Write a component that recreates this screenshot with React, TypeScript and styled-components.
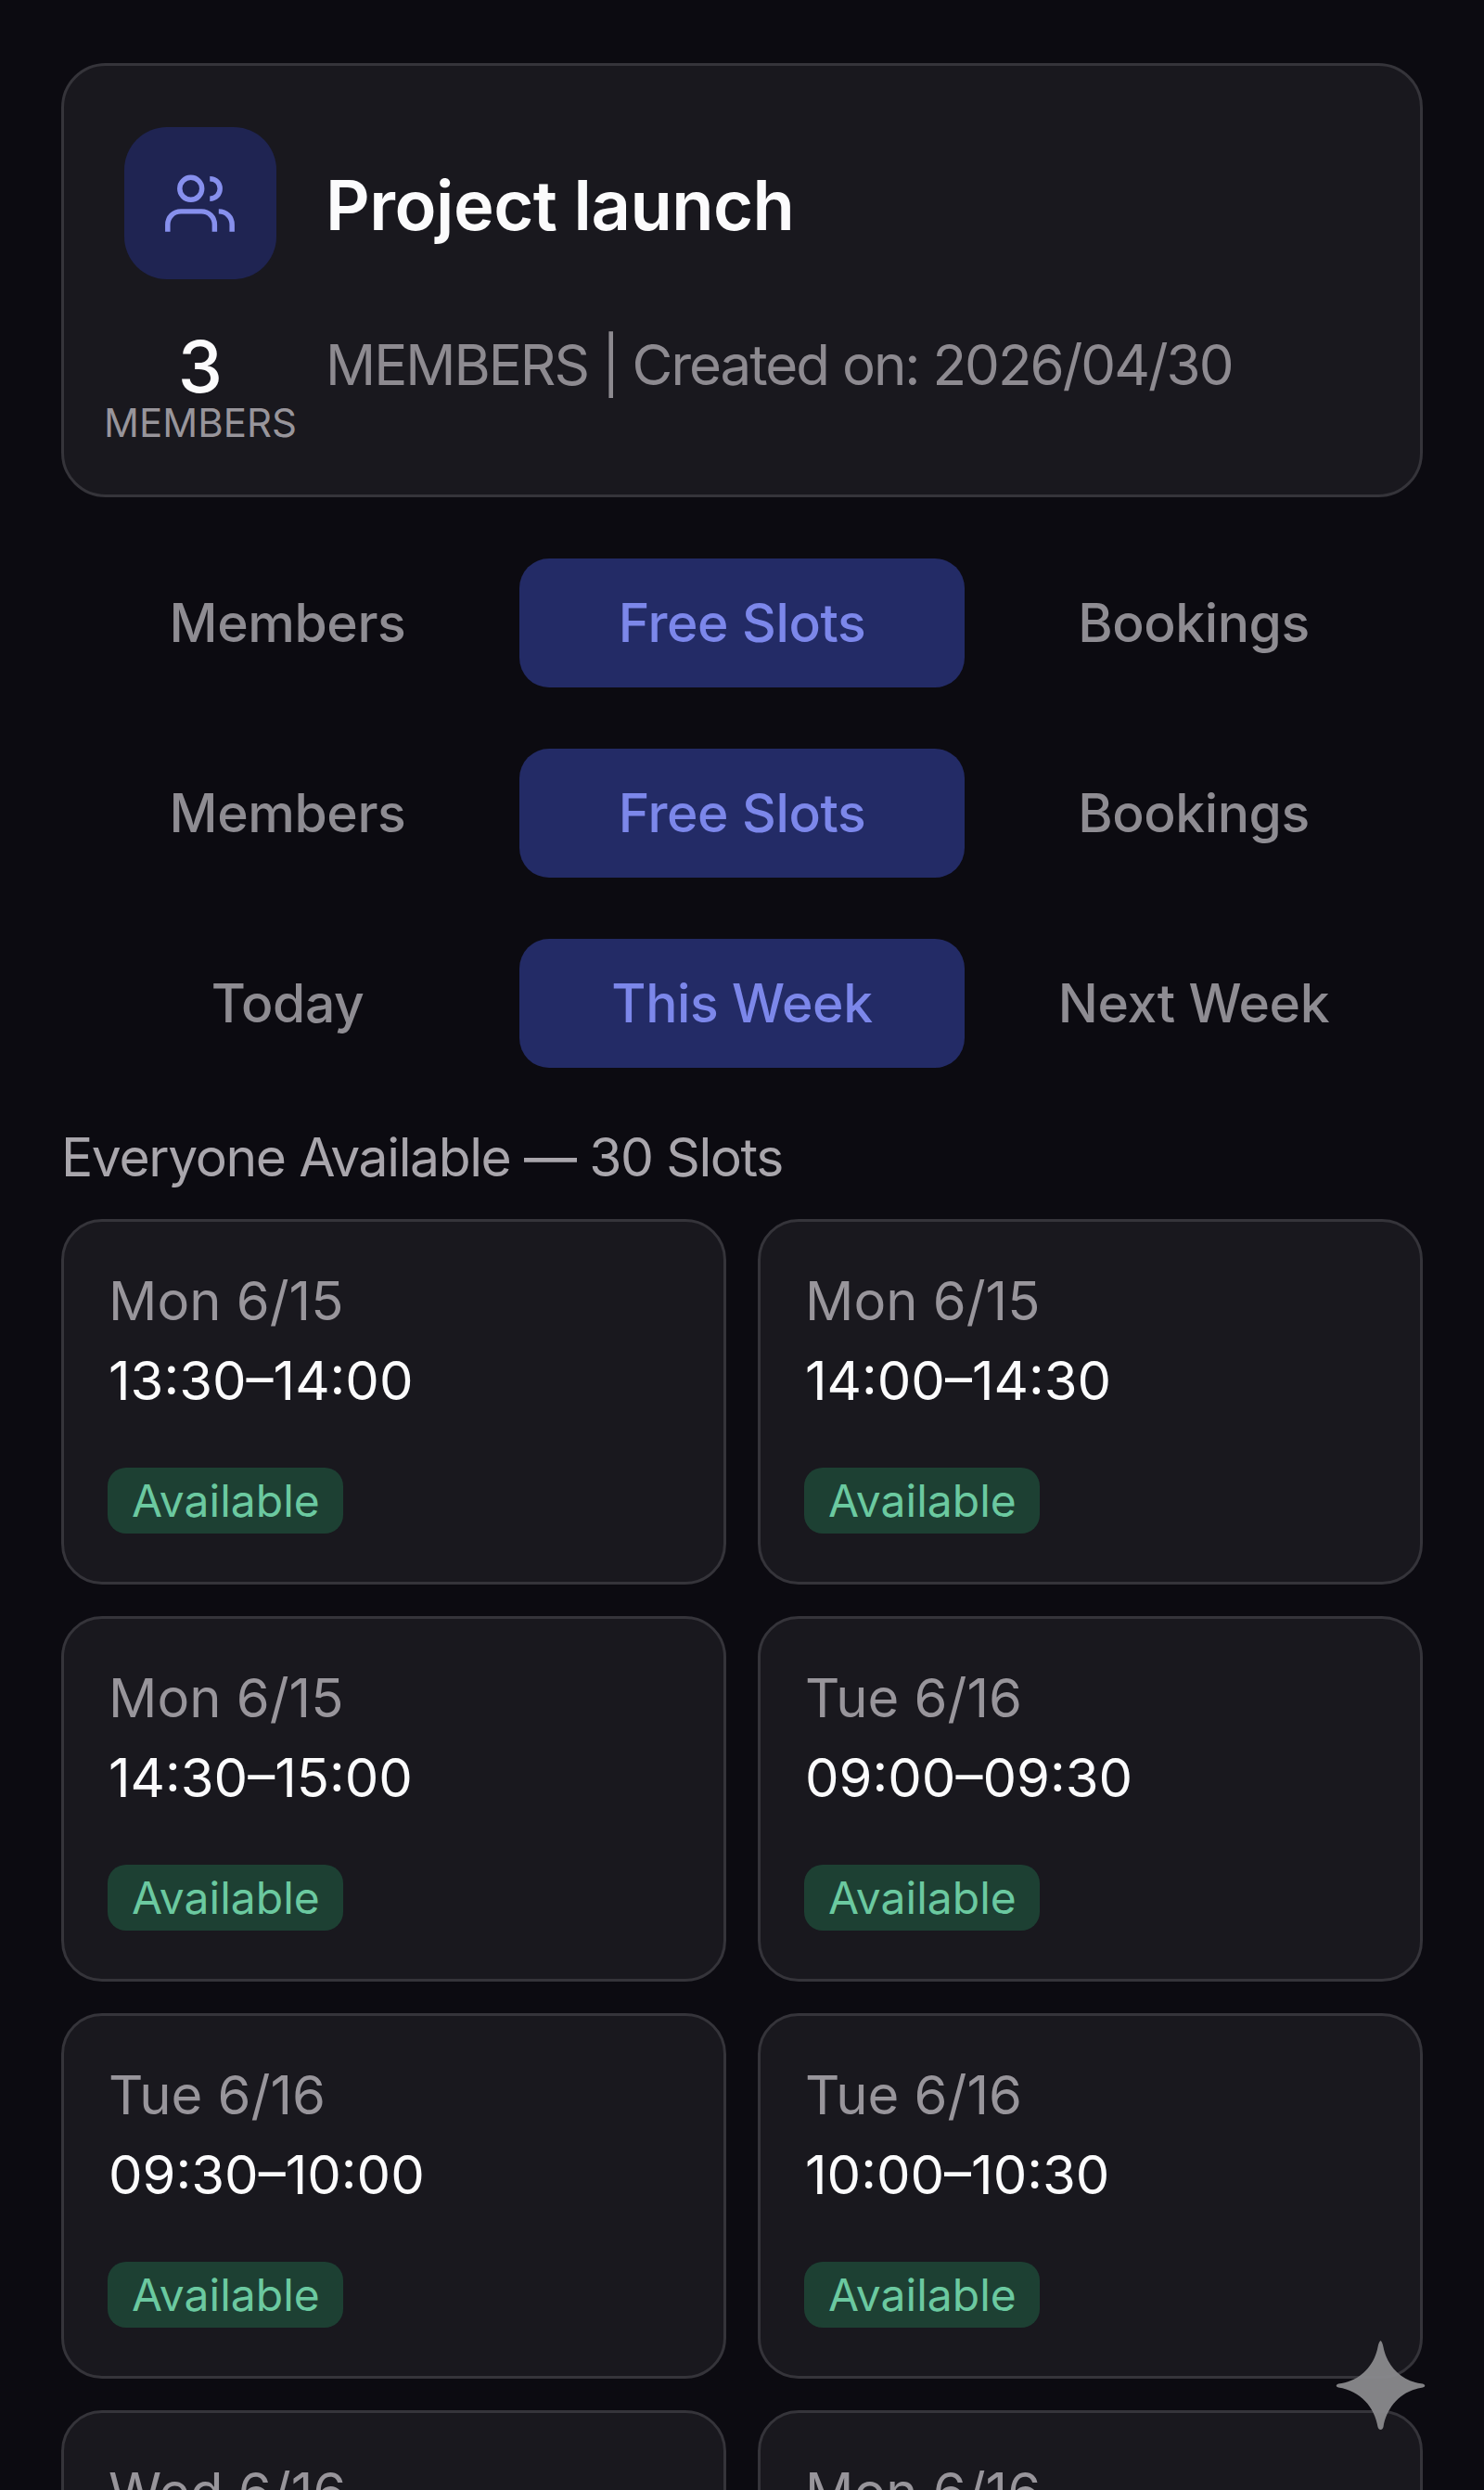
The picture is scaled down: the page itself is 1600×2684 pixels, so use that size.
import React from "react";
import styled, { createGlobalStyle } from "styled-components";

const Global = createGlobalStyle`
  html, body { margin: 0; padding: 0; background: #0c0b11; }
  body { font-family: Inter, "Noto Sans", "Liberation Sans", sans-serif; }
  * { box-sizing: border-box; }
`;

const Page = styled.div`
  position: relative;
  width: 1600px;
  height: 2684px;
  overflow: hidden;
  background: #0c0b11;
  padding: 68px 66px 0 66px;
`;

const HeaderCard = styled.section`
  height: 468px;
  background: #19181e;
  border: 3px solid #35343a;
  border-radius: 48px;
  padding: 66px 0 0 65px;
  display: grid;
  grid-template-columns: 164px 1fr;
  grid-template-rows: 164px auto;
  column-gap: 53px;
  row-gap: 56px;
`;

const IconTile = styled.div`
  width: 164px;
  height: 164px;
  border-radius: 46px;
  background: #1f2452;
  display: flex;
  align-items: center;
  justify-content: center;
`;

const Title = styled.h1`
  margin: 0;
  align-self: center;
  position: relative;
  top: 2px;
  font-size: 74px;
  font-weight: 600;
  line-height: 88px;
  letter-spacing: -0.5px;
  color: #fbfbfc;
`;

const Stat = styled.div`
  justify-self: center;
  display: flex;
  flex-direction: column;
  align-items: center;
  width: 164px;
  white-space: nowrap;
`;

const StatValue = styled.div`
  font-size: 77px;
  font-weight: 500;
  line-height: 76px;
  color: #fbfbfc;
`;

const StatLabel = styled.div`
  font-size: 42px;
  line-height: 46px;
  color: #98959b;
`;

const Meta = styled.div`
  font-size: 60px;
  line-height: 72px;
  letter-spacing: -2px;
  color: #8d8a90;
  white-space: nowrap;
`;

const TabRow = styled.nav`
  display: grid;
  grid-template-columns: 488px 480px 482px;
  column-gap: 6px;
  margin-top: 66px;
  height: 139px;
`;

const Tab = styled.div<{ $active?: boolean }>`
  display: flex;
  align-items: center;
  justify-content: center;
  border-radius: 32px;
  font-size: 57px;
  font-weight: 500;
  letter-spacing: -0.4px;
  color: ${(p) => (p.$active ? "#7c87ea" : "#8e8c92")};
  background: ${(p) => (p.$active ? "#232b66" : "transparent")};
`;

const SectionTitle = styled.h2`
  margin: 63px 0 0;
  font-size: 57px;
  font-weight: 400;
  line-height: 68px;
  letter-spacing: -1.4px;
  color: #a9a6ac;
`;

const SlotGrid = styled.div`
  margin-top: 32px;
  display: grid;
  grid-template-columns: 717px 717px;
  column-gap: 34px;
  row-gap: 34px;
`;

const SlotCard = styled.article`
  height: 394px;
  background: #19181e;
  border: 3px solid #35343a;
  border-radius: 44px;
  padding: 51px 0 0 48px;
  display: flex;
  flex-direction: column;
  align-items: flex-start;
`;

const SlotDate = styled.div`
  font-size: 58px;
  line-height: 68px;
  color: #98959b;
`;

const SlotTime = styled.div`
  margin-top: 18px;
  font-size: 58px;
  line-height: 68px;
  color: #fbfbfc;
`;

const Badge = styled.span`
  margin-top: 60px;
  margin-left: -1px;
  height: 71px;
  padding: 0 25px 0 26px;
  display: inline-flex;
  align-items: center;
  border-radius: 20px;
  background: #1d4033;
  color: #6bc9a0;
  font-size: 48px;
`;

const Sparkle = styled.svg`
  position: absolute;
  left: 1440px;
  top: 2523px;
  width: 97px;
  height: 98px;
`;

const slots = [
  ["Mon 6/15", "13:30–14:00"],
  ["Mon 6/15", "14:00–14:30"],
  ["Mon 6/15", "14:30–15:00"],
  ["Tue 6/16", "09:00–09:30"],
  ["Tue 6/16", "09:30–10:00"],
  ["Tue 6/16", "10:00–10:30"],
  ["Wed 6/16", "10:30–11:00"],
  ["Mon 6/16", "11:00–11:30"],
];

const tabs = ["Members", "Free Slots", "Bookings"];
const ranges = ["Today", "This Week", "Next Week"];

export default function App() {
  return (
    <Page>
      <Global />
      <HeaderCard>
        <IconTile>
          <svg width="82" height="67" viewBox="170 200 240 195" fill="none" stroke="#8790ee" strokeWidth="16">
            <circle cx="260" cy="250" r="35" />
            <path d="M320 219c20 0 32 14 32 31s-12 32-32 32" />
            <path d="M187 386v-22c0-24 18-42 42-42h64c24 0 42 18 42 42v22" />
            <path d="M348 322c24 0 42 18 42 42v22" />
          </svg>
        </IconTile>
        <Title>Project launch</Title>
        <Stat>
          <StatValue>3</StatValue>
          <StatLabel>MEMBERS</StatLabel>
        </Stat>
        <Meta>MEMBERS | Created on: 2026/04/30</Meta>
      </HeaderCard>

      <TabRow>
        {tabs.map((t, i) => (
          <Tab key={t} $active={i === 1}>{t}</Tab>
        ))}
      </TabRow>
      <TabRow>
        {tabs.map((t, i) => (
          <Tab key={t} $active={i === 1}>{t}</Tab>
        ))}
      </TabRow>
      <TabRow>
        {ranges.map((t, i) => (
          <Tab key={t} $active={i === 1}>{t}</Tab>
        ))}
      </TabRow>

      <SectionTitle>Everyone Available — 30 Slots</SectionTitle>
      <SlotGrid>
        {slots.map(([d, t]) => (
          <SlotCard key={t}>
            <SlotDate>{d}</SlotDate>
            <SlotTime>{t}</SlotTime>
            <Badge>Available</Badge>
          </SlotCard>
        ))}
      </SlotGrid>

      <Sparkle viewBox="0 0 97 98">
        <path
          d="M48.5 0C50 1 50.6 3 51.5 7C55 26 70 44 94 46.5C97 47.3 97 50 94 50.5C70 54 55 72 51.5 93C50.6 97 46.4 97 45.5 93C42 72 27 54 3 50.5C0 50 0 47.3 3 46.5C27 44 42 26 45.5 7C46.4 3 47 1 48.5 0Z"
          fill="#8a8a8d"
          fillOpacity="0.95"
        />
      </Sparkle>
    </Page>
  );
}
